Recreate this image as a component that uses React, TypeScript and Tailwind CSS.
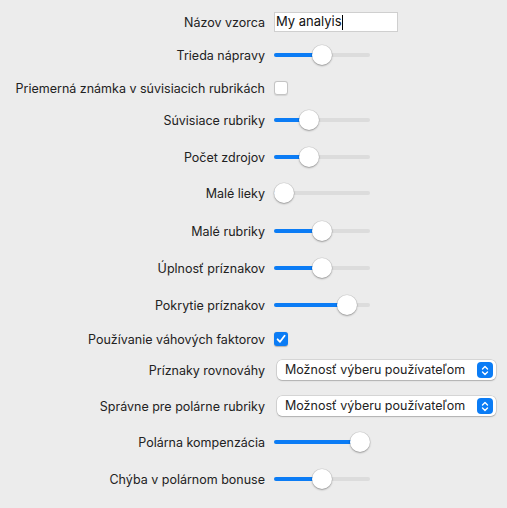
import React from "react";

type Row =
  | { kind: "text"; label: string; value: string; gap: string }
  | { kind: "slider"; label: string; value: number; gap: string }
  | { kind: "check"; label: string; checked: boolean; gap: string }
  | { kind: "select"; label: string; value: string; gap: string };

const rows: Row[] = [
  { kind: "text", label: "Názov vzorca", value: "My analyis", gap: "mt-0" },
  { kind: "slider", label: "Trieda nápravy", value: 0.5, gap: "mt-[9px]" },
  { kind: "check", label: "Priemerná známka v súvisiacich rubrikách", checked: false, gap: "mt-[9px]" },
  { kind: "slider", label: "Súvisiace rubriky", value: 0.33, gap: "mt-[8px]" },
  { kind: "slider", label: "Počet zdrojov", value: 0.33, gap: "mt-[13px]" },
  { kind: "slider", label: "Malé lieky", value: 0, gap: "mt-[12px]" },
  { kind: "slider", label: "Malé rubriky", value: 0.5, gap: "mt-[14px]" },
  { kind: "slider", label: "Úplnosť príznakov", value: 0.5, gap: "mt-[13px]" },
  { kind: "slider", label: "Pokrytie príznakov", value: 0.83, gap: "mt-[13px]" },
  { kind: "check", label: "Používanie váhových faktorov", checked: true, gap: "mt-[10px]" },
  { kind: "select", label: "Príznaky rovnováhy", value: "Možnosť výberu používateľom", gap: "mt-[7px]" },
  { kind: "select", label: "Správne pre polárne rubriky", value: "Možnosť výberu používateľom", gap: "mt-[12px]" },
  { kind: "slider", label: "Polárna kompenzácia", value: 1, gap: "mt-[12px]" },
  { kind: "slider", label: "Chýba v polárnom bonuse", value: 0.5, gap: "mt-[13px]" },
];

function Slider({ value }: { value: number }) {
  // track is 96px, thumb 20px, so the thumb travels 76px
  const left = Math.round(value * 76);
  return (
    <div className="relative w-[96px] h-[22px]">
      <div className="absolute left-0 right-0 top-[9px] h-[4px] rounded-full bg-[#dcdcdc]" />
      <div
        className="absolute left-0 top-[9px] h-[4px] rounded-full bg-[#0b7cf5]"
        style={{ width: left + 10 }}
      />
      <div
        className="absolute top-[1px] w-[20px] h-[20px] rounded-full bg-white shadow-[0_0_0_0.5px_rgba(0,0,0,0.12),0_1px_2px_rgba(0,0,0,0.3)]"
        style={{ left }}
      />
    </div>
  );
}

function Checkbox({ checked }: { checked: boolean }) {
  if (checked) {
    return (
      <div className="w-[14px] h-[14px] rounded-[3px] bg-[#0b7cf5] flex items-center justify-center shadow-[0_0.5px_1px_rgba(0,0,0,0.25)]">
        <svg width="10" height="10" viewBox="0 0 10 10" fill="none">
          <path d="M1.6 5.3 L4 7.8 L8.6 1.8" stroke="white" strokeWidth="1.8" strokeLinecap="round" strokeLinejoin="round" />
        </svg>
      </div>
    );
  }
  return (
    <div className="w-[14px] h-[14px] rounded-[3px] bg-white border border-[#c4c4c4] shadow-[0_0.5px_1px_rgba(0,0,0,0.1)]" />
  );
}

function Select({ value }: { value: string }) {
  return (
    <div className="ml-[3px] w-[219px] h-[20px] rounded-[5px] bg-white flex items-center justify-between pl-[8px] pr-[3px] shadow-[0_0_0_0.5px_rgba(0,0,0,0.18),0_1px_1.5px_rgba(0,0,0,0.18)]">
      <span className="text-[12.5px] text-[#222] whitespace-nowrap">{value}</span>
      <div className="w-[16px] h-[16px] rounded-[4px] bg-[#0b7cf5] flex items-center justify-center">
        <svg width="8" height="11" viewBox="0 0 8 11" fill="none">
          <path d="M1.5 4 L4 1.5 L6.5 4" stroke="white" strokeWidth="1.4" strokeLinecap="round" strokeLinejoin="round" />
          <path d="M1.5 7 L4 9.5 L6.5 7" stroke="white" strokeWidth="1.4" strokeLinecap="round" strokeLinejoin="round" />
        </svg>
      </div>
    </div>
  );
}

function TextField({ value }: { value: string }) {
  return (
    <div className="w-[124px] h-[20px] bg-white border border-[#cfcfcf] flex items-center pl-[1px]">
      <span className="text-[13px] text-[#111]">{value}</span>
      <span className="w-px h-[15px] bg-black" />
    </div>
  );
}

export default function App() {
  return (
    <div
      className="w-[507px] h-[508px] bg-[#ececec] pt-[10px] flex flex-col"
      style={{ fontFamily: "Inter, 'Noto Sans', 'Liberation Sans', sans-serif" }}
    >
      {rows.map((row) => (
        <div key={row.label} className={`${row.gap} h-[24px] flex items-center`}>
          <div className="w-[265px] shrink-0 pt-[2px] text-right text-[12.5px] text-[#222] whitespace-nowrap">
            {row.label}
          </div>
          <div className="ml-[9px] flex items-center">
            {row.kind === "text" && <TextField value={row.value} />}
            {row.kind === "slider" && <Slider value={row.value} />}
            {row.kind === "check" && <Checkbox checked={row.checked} />}
            {row.kind === "select" && <Select value={row.value} />}
          </div>
        </div>
      ))}
    </div>
  );
}
